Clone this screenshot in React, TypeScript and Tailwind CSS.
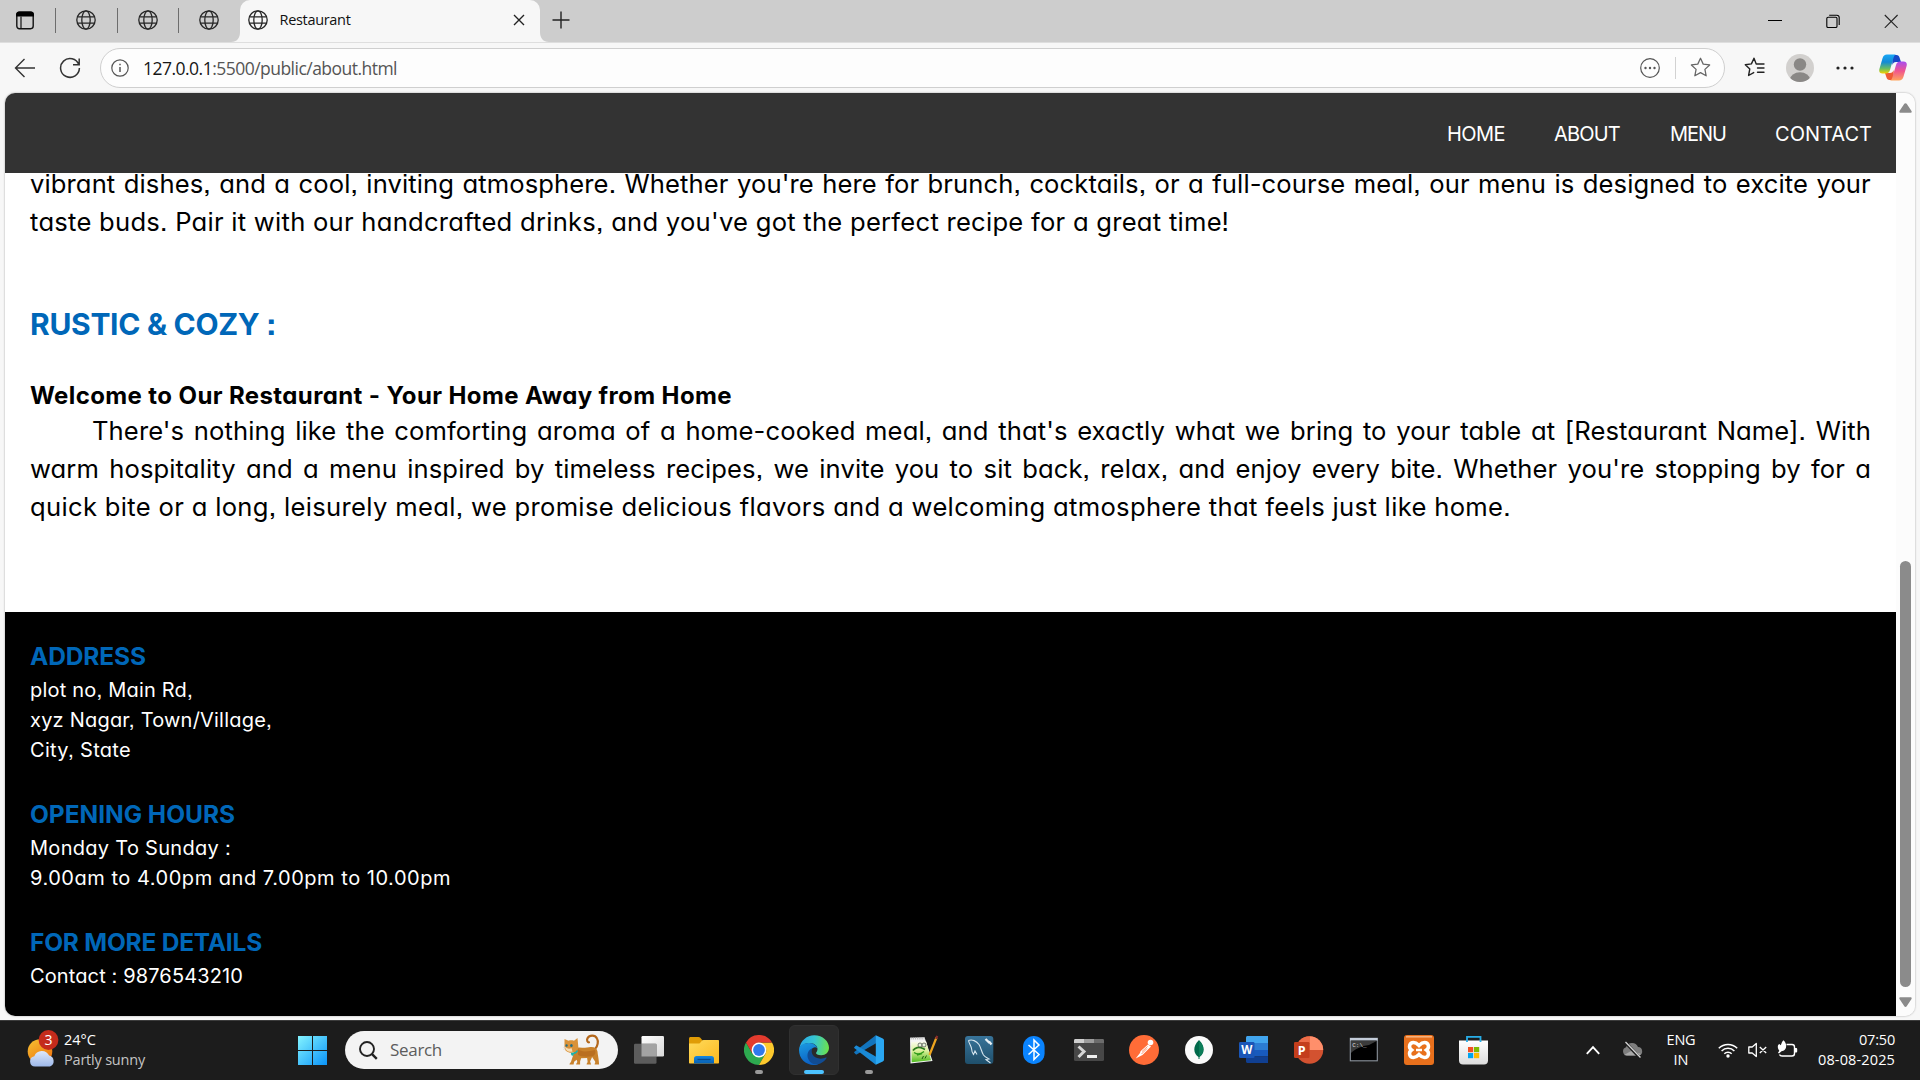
import { useLayoutEffect, useRef, type ReactNode } from "react";

const POP = "font-[Inter,sans-serif] [font-feature-settings:'cv11','ss07']";
const SEG = "font-['Open_Sans','Noto_Sans',sans-serif]";

/* One line of text whose tracking is adjusted so that it spans `w` pixels. */
function Fit({ w, className = "", children }: { w: number; className?: string; children: ReactNode }) {
  const ref = useRef<HTMLSpanElement>(null);
  useLayoutEffect(() => {
    const el = ref.current;
    if (!el) return;
    const n = (el.textContent || "").length;
    el.style.letterSpacing = "0px";
    const natural = el.getBoundingClientRect().width;
    el.style.letterSpacing = `${(w - natural) / n}px`;
  }, [w]);
  return (
    <span ref={ref} className={"inline-block w-fit whitespace-nowrap " + className}>
      {children}
    </span>
  );
}

/* A fully justified line: words are spread over the whole column. */
function Justified({ text, className = "" }: { text: string; className?: string }) {
  return (
    <div className={"flex justify-between whitespace-nowrap " + className}>
      {text.split(" ").map((word, i) => (
        <span key={i}>{word}</span>
      ))}
    </div>
  );
}

function Globe() {
  return (
    <svg width="20" height="20" viewBox="0 0 20 20" fill="none" stroke="#262626" strokeWidth="1.3" className="shrink-0">
      <circle cx="10" cy="10" r="9.2" />
      <ellipse cx="10" cy="10" rx="4.2" ry="9.2" />
      <path d="M1.6 6.8h16.8M1.6 13.2h16.8" />
    </svg>
  );
}

function TabStrip() {
  return (
    <div className="flex h-[42px] bg-[#cdcdcd]">
      <div className="flex w-[55px] items-center pb-[2px] pl-4">
        <svg width="18" height="19" viewBox="0 0 18 19">
          <rect x=".8" y="1.3" width="16.4" height="16.4" rx="2.6" fill="none" stroke="#111" strokeWidth="1.4" />
          <path d="M.1 5.6V3.400C.1 1.800 1.400.6 3 .6h12c1.600 0 2.900 1.200 2.900 2.800v2.200z" fill="#000" />
          <path d="M5 5.500v12" stroke="#111" strokeWidth="1.200" />
        </svg>
      </div>
      {[0, 1, 2].map((i) => (
        <div key={i} className="flex h-10 w-[61.500px] items-center">
          <div className="h-[25px] w-px bg-[#6d6d6d]" />
          <div className="ml-5 flex">
            <Globe />
          </div>
        </div>
      ))}
      <div className="relative flex h-[42px] w-[300px] items-center rounded-t-[10px] bg-[#f7f7f7] pb-[2px] pl-[8px]">
        <svg className="absolute bottom-0 -left-[9px]" width="9" height="10" viewBox="0 0 9 10">
          <path d="M9 0v10H0C6 10 9 6 9 0z" fill="#f7f7f7" />
        </svg>
        <svg className="absolute -right-[9px] bottom-0" width="9" height="10" viewBox="0 0 9 10">
          <path d="M0 0v10h9C3 10 0 6 0 0z" fill="#f7f7f7" />
        </svg>
        <Globe />
        <Fit w={71} className="ml-3 text-[14.500px] leading-5 text-[#111]">
          Restaurant
        </Fit>
        <svg width="12" height="12" viewBox="0 0 12 12" stroke="#222" strokeWidth="1.4" className="mr-[15px] ml-auto">
          <path d="M1 1l10 10M11 1L1 11" />
        </svg>
      </div>
      <svg width="18" height="18" viewBox="0 0 18 18" stroke="#222" strokeWidth="1.400" className="mt-[11px] ml-[12px]">
        <path d="M9 .5v17M.5 9h17" />
      </svg>
      <div className="mt-[14px] mr-[22px] ml-auto flex h-[14px] gap-[44px]">
        <svg width="14" height="14" viewBox="0 0 14 14" stroke="#000" strokeWidth="1">
          <path d="M0 6.500h14" />
        </svg>
        <svg width="14" height="14" viewBox="0 0 14 14" fill="none" stroke="#000" strokeWidth="1.100">
          <rect x=".8" y="3.300" width="10.200" height="10.200" rx="1.300" />
          <path d="M3.200 1.200h7.600c1.500 0 2.400.9 2.400 2.400v7.400" />
        </svg>
        <svg width="14" height="14" viewBox="0 0 14 14" stroke="#222" strokeWidth="1.100">
          <path d="M.8 1l12.800 12.800M13.600 1L.8 13.800" />
        </svg>
      </div>
    </div>
  );
}

const STAR = "M10 1.200l2.600 5.600 6.100.8-4.500 4.200 1.200 6.100L10 14.900l-5.400 3 1.200-6.100L1.300 7.600l6.100-.8z";

function Toolbar() {
  return (
    <div className="flex h-[51px] items-center border-t border-[#dedede] bg-[#f7f7f7] pb-px">
      <svg width="21" height="20" viewBox="0 0 21 20" fill="none" stroke="#333" strokeWidth="1.400" className="ml-[14px]">
        <path d="M21 10H1.500M10.500 1L1.500 10l9 9" />
      </svg>
      <svg width="22" height="22" viewBox="0 0 22 22" fill="none" stroke="#333" strokeWidth="1.500" className="ml-6">
        <path d="M19.800 7.600A9.400 9.400 0 1 0 20.400 11M20.200 1.500v6.200H14" />
      </svg>
      <div className="ml-[19px] flex h-10 w-[1625px] items-center rounded-full border border-[#cfcfcf] bg-[#fdfdfd]">
        <svg width="18" height="18" viewBox="0 0 18 18" fill="none" stroke="#555" strokeWidth="1.200" className="ml-[10px]">
          <circle cx="9" cy="9" r="8.200" />
          <path d="M9 8v5M9 4.700v1.500" strokeWidth="1.500" />
        </svg>
        <Fit w={254} className="ml-[14px] text-[17.500px] leading-6 text-[#555]">
          <span className="text-[#161616]">127.0.0.1</span>:5500/public/about.html
        </Fit>
        <svg width="20" height="20" viewBox="0 0 20 20" fill="none" stroke="#555" strokeWidth="1.200" className="ml-auto">
          <circle cx="10" cy="10" r="9.300" />
          <g fill="#555" stroke="none">
            <circle cx="5.500" cy="10" r="1.200" />
            <circle cx="10" cy="10" r="1.200" />
            <circle cx="14.500" cy="10" r="1.200" />
          </g>
        </svg>
        <div className="ml-[15px] h-[22px] w-px bg-[#d2d2d2]" />
        <svg width="21" height="21" viewBox="0 0 20 20" fill="none" stroke="#666" strokeWidth="1.200" strokeLinejoin="round" className="mr-[13px] ml-[14px]">
          <path d={STAR} />
        </svg>
      </div>
      <svg width="21" height="21" viewBox="0 0 21 21" fill="none" stroke="#222" strokeWidth="1.400" strokeLinejoin="round" strokeLinecap="round" className="ml-[19px]">
        <path d="M12.200 6.900L10 1.200 7.400 6.900l-6.100.8 4.500 4.200-1.200 6.600 5.100-2.900M12.200 7h7.800M13.500 11H20M13.500 15.200H20" />
      </svg>
      <svg width="28" height="28" viewBox="0 0 28 28" className="ml-[21px]">
        <defs>
          <clipPath id="avatar">
            <circle cx="14" cy="14" r="14" />
          </clipPath>
        </defs>
        <g clipPath="url(#avatar)">
          <rect width="28" height="28" fill="#d2d0ce" />
          <circle cx="14" cy="10.500" r="6.200" fill="#8a8886" />
          <ellipse cx="14" cy="25.500" rx="10" ry="7.200" fill="#8a8886" />
        </g>
      </svg>
      <svg width="18" height="4" viewBox="0 0 18 4" fill="#222" className="ml-[22px]">
        <circle cx="2" cy="2" r="1.600" />
        <circle cx="9" cy="2" r="1.600" />
        <circle cx="16" cy="2" r="1.600" />
      </svg>
      <svg width="28" height="27" viewBox="0 0 28 27" className="ml-[25px]">
        <defs>
          <linearGradient id="cpA" x1="0" y1="0" x2="0" y2="1">
            <stop offset="0" stopColor="#19a7f5" />
            <stop offset=".4" stopColor="#128ad6" />
            <stop offset=".75" stopColor="#6bbf5f" />
            <stop offset="1" stopColor="#f5d000" />
          </linearGradient>
          <linearGradient id="cpB" x1="0" y1="0" x2="0" y2="1">
            <stop offset="0" stopColor="#a84df0" />
            <stop offset=".5" stopColor="#f0558f" />
            <stop offset="1" stopColor="#ffa45c" />
          </linearGradient>
        </defs>
        <path d="M13 1h4.500c1.800 0 2.500 1 3 2.500L22 8h-5c-2 0-3 1-3.600 3z" fill="#1748c6" />
        <path d="M15 26h-4.500c-1.800 0-2.500-1-3-2.500L6 19h5c2 0 3-1 3.600-3z" fill="#ee5a35" />
        <path d="M8 .5h9c-1.500.6-2 1.800-2.600 3.800L11 16c-.7 2.300-1.800 3.500-4.200 3.500H3.500C.8 19.500-.3 17.500.4 15L3.600 4C4.300 1.700 5.600.5 8 .5z" fill="url(#cpA)" />
        <path d="M20 26.500h-9c1.500-.6 2-1.800 2.600-3.800L17 11c.7-2.300 1.800-3.500 4.200-3.500h3.300c2.700 0 3.800 2 3.100 4.500L24.400 23c-.7 2.300-2 3.500-4.400 3.500z" fill="url(#cpB)" />
      </svg>
    </div>
  );
}

function Page() {
  return (
    <div className={"flex w-[1891px] flex-col bg-white " + POP}>
      <nav className="flex h-20 items-center justify-end bg-[#333333] pt-px pr-6 text-[20px] leading-[30px] text-white">
        <Fit w={58}>HOME</Fit>
        <Fit w={66} className="ml-[49px]">ABOUT</Fit>
        <Fit w={56} className="ml-[50px]">MENU</Fit>
        <Fit w={97} className="ml-[49px]">CONTACT</Fit>
      </nav>
      <main className="h-[439px] pr-[25px] pl-[25px] text-black">
        <div className="text-[25.600px] leading-[38px] tracking-[0.100px]">
          <Justified
            className="h-[30px] leading-[22px]"
            text="vibrant dishes, and a cool, inviting atmosphere. Whether you're here for brunch, cocktails, or a full-course meal, our menu is designed to excite your"
          />
          <Fit w={1199} className="align-top">
            taste buds. Pair it with our handcrafted drinks, and you've got the perfect recipe for a great time!
          </Fit>
        </div>
        <h2 className="mt-[61px] h-[45px] text-[30px] leading-[45px] font-bold text-[#0067b8]">
          <Fit w={246}>RUSTIC &amp; COZY :</Fit>
        </h2>
        <h3 className="mt-[31px] h-[34px] text-[24px] leading-9 font-bold">
          <Fit w={702}>Welcome to Our Restaurant - Your Home Away from Home</Fit>
        </h3>
        <div className="text-[25.600px] leading-[38px] tracking-[0.100px]">
          <Justified
            className="pl-[62px]"
            text="There's nothing like the comforting aroma of a home-cooked meal, and that's exactly what we bring to your table at [Restaurant Name]. With"
          />
          <Justified text="warm hospitality and a menu inspired by timeless recipes, we invite you to sit back, relax, and enjoy every bite. Whether you're stopping by for a" />
          <Fit w={1481}>
            quick bite or a long, leisurely meal, we promise delicious flavors and a welcoming atmosphere that feels just like home.
          </Fit>
        </div>
      </main>
      <footer className="flex-1 bg-black pt-[25px] pl-[25px] text-[20px] leading-[30px] text-white">
        <FooterHead w={116}>ADDRESS</FooterHead>
        <FooterLine w={163}>plot no, Main Rd,</FooterLine>
        <FooterLine w={242}>xyz Nagar, Town/Village,</FooterLine>
        <FooterLine w={101}>City, State</FooterLine>
        <div className="h-[30px]" />
        <FooterHead w={205}>OPENING HOURS</FooterHead>
        <FooterLine w={201}>Monday To Sunday :</FooterLine>
        <FooterLine w={421}>9.00am to 4.00pm and 7.00pm to 10.00pm</FooterLine>
        <div className="h-[30px]" />
        <FooterHead w={232}>FOR MORE DETAILS</FooterHead>
        <FooterLine w={213}>Contact : 9876543210</FooterLine>
      </footer>
    </div>
  );
}

function FooterHead({ w, children }: { w: number; children: ReactNode }) {
  return (
    <h4 className="h-[38px] text-[24.500px] leading-[38px] font-bold text-[#0067b8]">
      <Fit w={w}>{children}</Fit>
    </h4>
  );
}

function FooterLine({ w, children }: { w: number; children: ReactNode }) {
  return (
    <p className="h-[30px]">
      <Fit w={w}>{children}</Fit>
    </p>
  );
}

function Scrollbar() {
  return (
    <div className="flex w-[19px] flex-col items-center bg-[#fcfcfc] pt-[10px] pb-[9px]">
      <svg width="13" height="10" viewBox="0 0 13 10" fill="#8b8b8b">
        <path d="M5.300.8c.6-.9 1.800-.9 2.400 0l4.800 7.200c.5.800 0 1.700-.9 1.700H1.400C.5 9.700 0 8.800.500 8z" />
      </svg>
      <div className="mt-[448px] h-[426px] w-[11px] rounded-full bg-[#8b8b8b]" />
      <svg width="13" height="10" viewBox="0 0 13 10" fill="#8b8b8b" className="mt-auto">
        <path d="M5.300 9.200c.6.900 1.800.9 2.400 0L12.500 2c.5-.8 0-1.700-.9-1.700H1.400C.5.300 0 1.200.500 2z" />
      </svg>
    </div>
  );
}

function Weather() {
  return (
    <svg width="32" height="38" viewBox="0 0 32 38">
      <defs>
        <linearGradient id="sun" x1="0" y1="0" x2=".7" y2="1">
          <stop offset="0" stopColor="#f6c232" />
          <stop offset="1" stopColor="#ee7410" />
        </linearGradient>
        <linearGradient id="cloud" x1="0" y1="0" x2="0" y2="1">
          <stop offset="0" stopColor="#dfe9fb" />
          <stop offset="1" stopColor="#9db8ea" />
        </linearGradient>
      </defs>
      <circle cx="13" cy="21.500" r="12.300" fill="url(#sun)" />
      <path d="M8 36.500a5.200 5.200 0 0 1-.7-10.300 8 8 0 0 1 14.800-.6 5.700 5.700 0 0 1 .9 10.900z" fill="url(#cloud)" />
      <circle cx="21.500" cy="10" r="9.900" fill="#c42b1c" />
      <text x="21.500" y="15" textAnchor="middle" fontSize="14" fill="#fff" fontFamily="Open Sans">
        3
      </text>
    </svg>
  );
}

function Cat() {
  return (
    <svg width="38" height="32" viewBox="0 0 38 32">
      <path d="M33 15c3-3 3.500-8 2-10.500C33 .8 27.500 .8 25.500 4.300c-1 2 0 4 1.500 4" fill="none" stroke="#b4681c" strokeWidth="2.200" strokeLinecap="round" />
      <path d="M13 14c5-1.500 9 .5 14-.8 4-1 8 .4 8.500 4.300.2 3 1 6 1.300 9.500l.3 3.500h-4.500c0-1.500 1-1.500.5-3l-3-4.500-2 4.500 1 3h-4.500c0-1.500 1-1.500 1-3l-.5-3.500-6 .3-1 3.200v3h-4c0-1.500 1.200-1.600 1.200-2.800l-.7-2-2.500 2-.5 2.800H7.500c0-1.400 1-1.700 1.500-2.800l2-6z" fill="#c9822c" />
      <path d="M16 15c4 4 11 2 17 1 1 3 0 5-2 6-5 1-11 1-15-1z" fill="#b0651b" opacity=".65" />
      <path d="M2.500 5l4 1.800c2-.6 3.500-.6 5.500 0L15.500 4l.8 8.500c.2 4-3 6.200-7 6.200-4 0-7.300-2.500-6.800-6.300z" fill="#d99239" />
      <path d="M3.500 13c2 2 4 2 6 1l1 3.500c-3 1-7 0-7-4.500z" fill="#f5dcb5" />
      <ellipse cx="4.600" cy="11.500" rx="1.100" ry="1.300" fill="#1f6d86" />
      <ellipse cx="9.400" cy="11.500" rx="1.300" ry="1.500" fill="#1f6d86" />
      <path d="M1 13.500h3M1 15.500l3-.7" stroke="#ddd" strokeWidth=".6" />
      <path d="M9 19.500c3 .5 5.500-1 6.500-3" fill="none" stroke="#1ab3ac" strokeWidth="1.600" />
      <circle cx="10.500" cy="20.500" r="1.200" fill="#1ab3ac" />
    </svg>
  );
}

const icon = { width: 30, height: 30, viewBox: "0 0 30 30" };

function TaskView() {
  return (
    <svg {...icon}>
      <defs>
        <linearGradient id="tv" x1="0" y1="0" x2="1" y2="1">
          <stop offset="0" stopColor="#fff" />
          <stop offset="1" stopColor="#d9d9d9" />
        </linearGradient>
      </defs>
      <rect x="7.500" y="1" width="22.500" height="20.500" rx="1.200" fill="url(#tv)" />
      <rect x="0" y="8.800" width="22.500" height="20" rx="1.200" fill="#5c5c5c" />
      <path d="M7.500 8.800h15v12.700h-15z" fill="#a3a3a3" />
    </svg>
  );
}

function Folder() {
  return (
    <svg {...icon}>
      <defs>
        <linearGradient id="fo" x1="0" y1="0" x2="1" y2="1">
          <stop offset="0" stopColor="#ffdb5c" />
          <stop offset="1" stopColor="#fbb81f" />
        </linearGradient>
        <linearGradient id="fb" x1="0" y1="0" x2="0" y2="1">
          <stop offset="0" stopColor="#1787de" />
          <stop offset="1" stopColor="#0760b4" />
        </linearGradient>
      </defs>
      <path d="M0 3.500C0 2.600.7 2 1.500 2h8c.8 0 1.300.3 1.800.8L14 6v6H0z" fill="#e09c06" />
      <path d="M0 8.500h9.500c1 0 1.500-.4 2.200-1.200l1.200-1.500c.5-.6 1-.8 1.800-.8H29c.6 0 1 .4 1 1v21.500c0 .6-.4 1-1 1H1c-.6 0-1-.4-1-1z" fill="url(#fo)" />
      <path d="M5 28.500v-5c0-1.500 1-2.500 2.500-2.500h15c1.500 0 2.500 1 2.500 2.500v5z" fill="url(#fb)" />
      <path d="M8.500 24.500h13" stroke="#0a4a8c" strokeWidth="1.300" />
    </svg>
  );
}

function Chrome() {
  return (
    <svg {...icon}>
      <path d="M2 7.500A15 15 0 0 0 15 30l6.500-11.300L15 15 8.500 18.700z" fill="#2da94f" />
      <path d="M28 7.500A15 15 0 0 1 15 30l6.500-11.300c1.300-2.600 1-5.500-1-7.700L15 7.500z" fill="#fdc92d" />
      <path d="M15 7.500h13A15 15 0 0 0 2 7.500l6.500 11.200z" fill="#e33b2e" />
      <circle cx="15" cy="15" r="7.400" fill="#fff" />
      <circle cx="15" cy="15" r="5.900" fill="#3079ec" />
    </svg>
  );
}

function Edge() {
  return (
    <svg {...icon}>
      <defs>
        <linearGradient id="e1" x1="0" y1=".3" x2="1" y2=".4">
          <stop offset="0" stopColor="#28a8ea" />
          <stop offset=".5" stopColor="#36c5d0" />
          <stop offset="1" stopColor="#6be24e" />
        </linearGradient>
        <linearGradient id="e2" x1="0" y1="0" x2=".3" y2="1">
          <stop offset="0" stopColor="#1b9de2" />
          <stop offset="1" stopColor="#0c62c4" />
        </linearGradient>
      </defs>
      <path d="M.3 13.500C1.500 5.500 8 .2 15.200.2 24 .2 30 6.500 30 12.800c0 4.500-3.300 7.500-7.700 7.500-3.600 0-5.300-1.200-5.300-2.200 0-.8 1.500-1.500 1.500-4C18.500 11 15.500 8 10.500 8 5.500 8 1.500 10.500.3 13.500z" fill="url(#e1)" />
      <path d="M0 15C0 10.500 4.500 7.500 10.500 8c4.500.3 7.300 2.800 7.900 5.500-1-1.300-2.800-1.600-4.500-.5C11 15 10 19 12 23c1.500 3 4 5 7 6.400-1.300.4-2.700.6-4 .6C6.500 30 0 23.500 0 15z" fill="url(#e2)" />
      <path d="M12.200 13.700C8.500 16 7.500 20.500 9.500 24.500c1.800 3.600 5 5.300 9 5 4-.8 7.300-3.300 9.100-6.400.3-.5-.1-.9-.6-.6-5 2.300-11.500 1-13.500-3-1-2-1-4-.3-5.800z" fill="#114c93" />
    </svg>
  );
}

function VSCode() {
  return (
    <svg {...icon}>
      <path d="M21.800.3L.5 16.700c-.5.4-.5 1 0 1.400l1.200 1.200c.4.300.9.300 1.300 0L22.500 8z" fill="#1274bd" />
      <path d="M21.800 29.700L.5 13.300c-.5-.4-.5-1 0-1.400l1.200-1.200c.4-.3.9-.3 1.300 0L22.500 22z" fill="#1a8ad6" />
      <path d="M21.800.3c-.2.600 0 1 0 1.700v26c0 .7-.2 1.100 0 1.700l7-3.200c.8-.4 1.200-1 1.200-1.800V5.300c0-.8-.4-1.400-1.200-1.800z" fill="#2aa7f2" />
    </svg>
  );
}

function NotepadPP() {
  return (
    <svg {...icon}>
      <defs>
        <linearGradient id="np" x1="0" y1="0" x2="0" y2="1">
          <stop offset="0" stopColor="#fbfcee" />
          <stop offset=".45" stopColor="#dbf09a" />
          <stop offset="1" stopColor="#4fbd1f" />
        </linearGradient>
      </defs>
      <path d="M1 2.800l14.500-.5L23.500 26 1.500 28.500z" fill="#f4f4f4" />
      <path d="M2.200 7l15-.5 4.800 18.700-19.300 2z" fill="url(#np)" />
      <path d="M1.500 3.500h14" stroke="#bbb" strokeWidth="1.800" strokeDasharray="1.200 1" />
      <path d="M4 15.500c2-3 6-4 9.500-2.200l2.500 1.200" fill="none" stroke="#2b7a1c" strokeWidth="1.700" />
      <path d="M5 17.500c3 2 7 1.500 10-1M8 20l5-1.500" fill="none" stroke="#2f9a1a" strokeWidth="1.400" />
      <circle cx="11" cy="10" r="2" fill="#e8f5dd" stroke="#444" strokeWidth=".7" />
      <circle cx="15" cy="10" r="2" fill="#e8f5dd" stroke="#444" strokeWidth=".7" />
      <path d="M13 24l1.500-3M16 23.500l1.500-3" stroke="#225f14" strokeWidth="1" />
      <path d="M27.500 2.500L20.500 20" stroke="#eda51f" strokeWidth="2.200" />
      <path d="M28.200.8l-1.200 3" stroke="#8a2c2c" strokeWidth="2.200" />
    </svg>
  );
}

function MySQL() {
  return (
    <svg {...icon}>
      <defs>
        <linearGradient id="my" x1="0" y1="0" x2="0" y2="1">
          <stop offset="0" stopColor="#38749a" />
          <stop offset="1" stopColor="#1f4f6b" />
        </linearGradient>
      </defs>
      <rect x="1" y="1" width="28.300" height="28" rx="3" fill="url(#my)" />
      <path d="M4.500 5.500C8 4 12.500 6 15 9.500c2 3 2.500 7.500 4.500 10.500 1.500 2 3.500 2.800 5.500 4l-3 .5c1.500 1.500 3 2.300 4.500 3.500M4.500 5.500c.5 3 2.500 5 3 8 .3 3 .5 4.500 2 6l1.500-3.500 2 3.500" fill="none" stroke="#d7e6ef" strokeWidth="1.100" />
      <path d="M21.500 4l4 3.800M25 6.500l2.500 3" stroke="#e8f0f5" strokeWidth="2.300" />
    </svg>
  );
}

function BluetoothIcon() {
  return (
    <svg {...icon}>
      <rect x="4" y="1" width="21.600" height="28" rx="10.800" fill="#0a84ff" />
      <path d="M9.500 10l10.500 9.500-5 5V5l5 5-10.500 9.500" fill="none" stroke="#fff" strokeWidth="1.500" />
    </svg>
  );
}

function Terminal() {
  return (
    <svg {...icon}>
      <rect x="0" y="4" width="30" height="22" rx="1.500" fill="#474747" />
      <path d="M0 5.500C0 4.600.6 4 1.500 4H10v4H0z" fill="#cfcfcf" />
      <path d="M10 4h10v4H10z" fill="#9c9c9c" />
      <path d="M20 4h8.500c.9 0 1.500.6 1.500 1.500V8H20z" fill="#6c6c6c" />
      <path d="M4.500 11.500l5.500 5-5.500 5.500" fill="none" stroke="#d5d5d5" strokeWidth="3" />
      <path d="M13 21.500h10" stroke="#efefef" strokeWidth="3" />
    </svg>
  );
}

function Postman() {
  return (
    <svg {...icon}>
      <circle cx="15" cy="15" r="15" fill="#ff6c37" />
      <circle cx="21.500" cy="7.500" r="2.800" fill="#fff" />
      <path d="M19 9.500l3 2-5.500 5.500-3 3-6.800 3.600 4.300-5.600.5-1.800z" fill="#fff" />
      <path d="M13 16.500l5.500-5M12.500 19l5.500-5.500" stroke="#ff6c37" strokeWidth=".7" />
    </svg>
  );
}

function Mongo() {
  return (
    <svg {...icon}>
      <circle cx="15" cy="15" r="14" fill="#fafafa" />
      <path d="M15 5c3.500 3.500 4.700 6.500 4.700 9.500 0 3.500-2 6-4.200 7.500V24h-1v-2c-2.200-1.500-4.200-4-4.200-7.500 0-3 1.200-6 4.700-9.500z" fill="#00684a" />
      <path d="M15 6v16c2.200-1.500 4.200-4 4.200-7.500S18 8.500 15 6z" fill="#0b7d58" />
    </svg>
  );
}

function Word() {
  return (
    <svg {...icon}>
      <path d="M7 2.500C7 1.700 7.700 1 8.500 1H29v7H7z" fill="#41a5ee" />
      <path d="M7 8h22v7H7z" fill="#2b7cd3" />
      <path d="M7 15h22v6.500H7z" fill="#185abd" />
      <path d="M7 21.500h22V28H8.500c-.8 0-1.500-.7-1.500-1.500z" fill="#103f91" />
      <rect x="0" y="7" width="15.500" height="16" rx="1.300" fill="#1a56b8" />
      <text x="7.800" y="19" textAnchor="middle" fontSize="11.500" fontWeight="700" fill="#fff" fontFamily="Open Sans">
        W
      </text>
    </svg>
  );
}

function PowerPoint() {
  return (
    <svg {...icon}>
      <circle cx="15.500" cy="15" r="13.700" fill="#d35230" />
      <path d="M15.500 1.300A13.700 13.700 0 0 1 29.200 15H15.500z" fill="#ff8f6b" />
      <path d="M15.500 1.300A13.700 13.700 0 0 0 1.800 15h13.700z" fill="#ed6c47" />
      <rect x="0" y="7" width="15.500" height="16" rx="1.300" fill="#c43e1c" />
      <text x="7.600" y="19.500" textAnchor="middle" fontSize="12.500" fontWeight="700" fill="#fff" fontFamily="Open Sans">
        P
      </text>
    </svg>
  );
}

function Cmd() {
  return (
    <svg {...icon}>
      <rect x="1.300" y="3.300" width="27" height="22.500" fill="#000" stroke="#8d949e" strokeWidth="1.100" />
      <path d="M1 3h27.600v2.500H1z" fill="#c3ccd9" />
      <path d="M2 6h25.700L20 10C12 11 6 14 2 18z" fill="#3b3b3b" />
      <text x="3.200" y="12" fontSize="6" fill="#ddd" fontFamily="Liberation Mono">
        C:\_
      </text>
    </svg>
  );
}

function Xampp() {
  return (
    <svg {...icon}>
      <rect x="0" y="0" width="30" height="30" rx="3" fill="#e8701c" />
      <path d="M2 1h26v1.600H2z" fill="#f5b07c" />
      <path d="M9.500 7.500c3 0 4 1.500 5.500 3 1.500-1.500 2.500-3 5.500-3 4 0 5.500 5 2 7.500 3.500 2.500 2 7.500-2 7.500-3 0-4-1.500-5.500-3-1.500 1.500-2.500 3-5.500 3-4 0-5.500-5-2-7.500-3.500-2.500-2-7.500 2-7.500z" fill="none" stroke="#fff" strokeWidth="3.500" />
      <path d="M12 15h6" stroke="#fff" strokeWidth="2.500" />
    </svg>
  );
}

function Store() {
  return (
    <svg {...icon}>
      <defs>
        <linearGradient id="st" x1="0" y1="0" x2="0" y2="1">
          <stop offset="0" stopColor="#fff" />
          <stop offset="1" stopColor="#dcdcdc" />
        </linearGradient>
      </defs>
      <path d="M0 5.500h29v20c0 2.500-1.500 4-4 4H4c-2.500 0-4-1.500-4-4z" fill="url(#st)" />
      <path d="M8 7V1.800h13.500V7" fill="none" stroke="#28aee8" strokeWidth="1.800" />
      <path d="M9 12h5.200v5.200H9z" fill="#f25022" />
      <path d="M15 12h5.200v5.200H15z" fill="#7fba00" />
      <path d="M9 18h5.200v5.200H9z" fill="#00a4ef" />
      <path d="M15 18h5.200v5.200H15z" fill="#ffb900" />
    </svg>
  );
}

const apps: { name: string; Icon: () => ReactNode; state?: "open" | "active" }[] = [
  { name: "task-view", Icon: TaskView },
  { name: "explorer", Icon: Folder },
  { name: "chrome", Icon: Chrome, state: "open" },
  { name: "edge", Icon: Edge, state: "active" },
  { name: "code", Icon: VSCode, state: "open" },
  { name: "notepad", Icon: NotepadPP },
  { name: "mysql", Icon: MySQL },
  { name: "bluetooth", Icon: BluetoothIcon },
  { name: "terminal", Icon: Terminal },
  { name: "postman", Icon: Postman },
  { name: "mongo", Icon: Mongo },
  { name: "word", Icon: Word },
  { name: "powerpoint", Icon: PowerPoint },
  { name: "cmd", Icon: Cmd },
  { name: "xampp", Icon: Xampp },
  { name: "store", Icon: Store },
];

function Taskbar() {
  return (
    <div className="flex h-[60px] items-center border-t border-[#3c3c3c] bg-[#1c1c1c] pb-px text-[14.500px] text-white">
      <div className="flex w-[298px] pb-px pl-[27px]">
        <Weather />
        <div className="ml-[5px] flex flex-col items-start leading-5">
          <Fit w={32}>24°C</Fit>
          <Fit w={81} className="text-[#c4c4c4]">
            Partly sunny
          </Fit>
        </div>
      </div>
      <svg width="29" height="29" viewBox="0 0 29 29">
        <defs>
          <linearGradient id="win" gradientUnits="userSpaceOnUse" x1="0" y1="0" x2="29" y2="29">
            <stop offset="0" stopColor="#84f4ff" />
            <stop offset="1" stopColor="#0a93f8" />
          </linearGradient>
        </defs>
        <path d="M0 0h14v14H0zM15 0h14v14H15zM0 15h14v14H0zM15 15h14v14H15z" fill="url(#win)" />
      </svg>
      <div className="ml-[18px] flex h-[38px] w-[273px] items-center rounded-full bg-[#f3f3f3] pr-[18px] pl-[14px]">
        <svg width="19" height="19" viewBox="0 0 19 19" fill="none" stroke="#222" strokeWidth="1.900">
          <circle cx="8" cy="8" r="7" />
          <path d="M12.800 12.800l5 5" strokeWidth="2.400" />
        </svg>
        <Fit w={52} className="ml-3 text-[17px] leading-6 text-[#5c5c5c]">
          Search
        </Fit>
        <div className="ml-auto">
          <Cat />
        </div>
      </div>
      <div className="ml-[3px] flex">
        {apps.map(({ name, Icon, state }) => (
          <div key={name} className="flex h-[50px] w-[55px] justify-center">
            <div
              className={
                state === "active"
                  ? "flex w-[50px] flex-col items-center rounded-md border border-[#303030] bg-[#2a2a2a] pt-[9px]"
                  : "flex w-[50px] flex-col items-center pt-[10px]"
              }
            >
              <Icon />
              {state === "active" && <div className="mt-[5px] h-1 w-5 rounded-full bg-[#4cc2ff]" />}
              {state === "open" && <div className="mt-[5px] h-1 w-2 rounded-full bg-[#9a9a9a]" />}
            </div>
          </div>
        ))}
      </div>
      <svg width="14" height="10" viewBox="0 0 14 10" fill="none" stroke="#fff" strokeWidth="1.900" className="ml-[85px]">
        <path d="M.8 8.800L7 2.200l6.200 6.600" />
      </svg>
      <svg width="21" height="18" viewBox="0 0 21 18" className="ml-[22px]">
        <path d="M4.500 14.500A4.300 4.300 0 0 1 4 6.200a6.500 6.500 0 0 1 12-.2 4.300 4.300 0 0 1 .8 8.500z" fill="#7e7e7e" />
        <path d="M2 14l8-4.500 9 3.500-2 1.500H5z" fill="#a9a9a9" />
        <path d="M3.500 1.500l14.500 15.500" stroke="#1c1c1c" strokeWidth="3" />
        <path d="M3.500 1l15 15.500" stroke="#d6d6d6" strokeWidth="1.300" />
      </svg>
      <div className="ml-[24px] flex w-[28px] flex-col items-center leading-5">
        <Fit w={29}>ENG</Fit>
        <Fit w={15}>IN</Fit>
      </div>
      <svg width="20" height="16" viewBox="0 0 20 16" fill="none" stroke="#fff" strokeWidth="1.500" className="ml-[23px]">
        <path d="M.8 6.200a13 13 0 0 1 18.400 0M3.600 9a9 9 0 0 1 12.800 0M6.300 11.700a5.200 5.200 0 0 1 7.400 0" />
        <circle cx="10" cy="14" r="1.700" fill="#fff" stroke="none" />
      </svg>
      <svg width="20" height="16" viewBox="0 0 20 16" fill="none" stroke="#fff" strokeWidth="1.300" strokeLinejoin="round" className="ml-[10px]">
        <path d="M.8 5h3.400L8.300 1.500v13L4.200 11H.8zM11.800 5l6.400 6M18.200 5l-6.400 6" />
      </svg>
      <svg width="21" height="18" viewBox="0 0 21 18" className="mb-[3px] ml-[9px]">
        <path d="M9.500 4.500H15c1.500 0 2.500 1 2.500 2.500v6.500c0 1.500-1 2.500-2.500 2.500H5c-1.200 0-2-.3-2.500-1.500" fill="none" stroke="#fff" strokeWidth="1.400" />
        <path d="M18 8h1c.8 0 1.200.5 1.200 1.200v2c0 .8-.4 1.300-1.200 1.300h-1z" fill="#fff" />
        <path d="M6.500.3C9.500 3 10 7 8 9.500c-1 1.300-2.200 1.700-3.500 1.700L2 13.500l-1-.7 1.300-2C.300 8 .3 5 2.300 4l1.500 1.300C4.500 3.500 5 1.500 6.500.3z" fill="#fff" />
      </svg>
      <div className="mr-[25px] ml-auto flex flex-col items-end pb-px leading-5">
        <Fit w={36}>07:50</Fit>
        <Fit w={77}>08-08-2025</Fit>
      </div>
    </div>
  );
}

export default function App() {
  return (
    <div className={"flex h-[1080px] w-[1920px] flex-col overflow-hidden bg-[#f7f7f7] " + SEG}>
      <TabStrip />
      <Toolbar />
      <div className="mx-[5px] mb-[4px] flex h-[923px] overflow-hidden rounded-[10px] shadow-[0_0_2px_#999]">
        <Page />
        <Scrollbar />
      </div>
      <Taskbar />
    </div>
  );
}
